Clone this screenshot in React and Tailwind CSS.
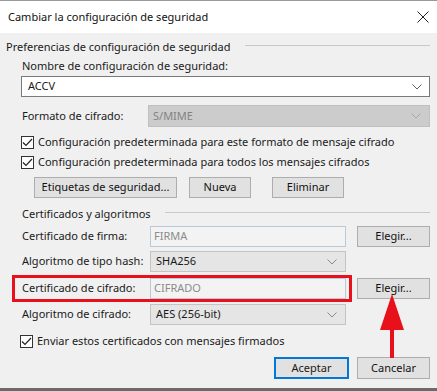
import React from "react";

const Chevron = ({ color = "#606060" }) => (
  <svg width="10" height="6" viewBox="0 0 10 6" className="shrink-0">
    <path d="M0.5 0.5 L5 5 L9.5 0.5" fill="none" stroke={color} strokeWidth="1" />
  </svg>
);

const Check = () => (
  <span className="w-[13px] h-[13px] border border-[#333] bg-white flex items-center justify-center shrink-0">
    <svg width="11" height="9" viewBox="0 0 11 9">
      <path d="M1 4.5 L4 7.5 L10 1" fill="none" stroke="#222" strokeWidth="1.2" />
    </svg>
  </span>
);

const Button = ({ children, className = "" }) => (
  <div
    className={`h-[21px] bg-[#e1e1e1] border border-[#adadad] flex items-center justify-center text-[#111] ${className}`}
  >
    {children}
  </div>
);

const Combo = ({ value, className = "" }) => (
  <div
    className={`h-[21px] bg-[#e5e5e5] border border-[#c4c4c4] flex items-center justify-between pl-[5px] pr-[8px] ${className}`}
  >
    <span>{value}</span>
    <Chevron color="#8a8a8a" />
  </div>
);

const Field = ({ value }) => (
  <div className="w-[196px] h-[21px] bg-[#f3f3f3] border border-[#b8c9dc] flex items-center pl-[3px] text-[#8c8c8c]">
    {value}
  </div>
);

export default function App() {
  return (
    <div
      className="relative w-[437px] h-[391px] bg-[#f0f0f0] text-[11px] text-[#1a1a1a] whitespace-nowrap overflow-hidden flex flex-col border-t border-[#9a9a9a]"
      style={{ fontFamily: '"Noto Sans", "Open Sans", sans-serif' }}
    >
      {/* title bar */}
      <div className="h-[32px] bg-white flex items-center justify-between pl-[8px] pr-[8px] shrink-0">
        <span className="text-[11px] text-[#111]">Cambiar la configuración de seguridad</span>
        <svg width="12" height="12" viewBox="0 0 12 12">
          <path d="M0.5 0.5 L11.5 11.5 M11.5 0.5 L0.5 11.5" stroke="#222" strokeWidth="1" />
        </svg>
      </div>

      <div className="flex items-center h-[16px] mt-[6px] pl-[6px] pr-[7px]">
        <span>Preferencias de configuración de seguridad</span>
        <div className="flex-1 h-px bg-[#c8c8c8] ml-[14px] -mt-[3px]" />
      </div>

      <div className="h-[16px] mt-[3px] pl-[22px] flex items-center">Nombre de configuración de seguridad:</div>

      <div className="h-[21px] mt-[2px] ml-[21px] mr-[7px] bg-white border border-[#7a7a7a] flex items-center justify-between pl-[6px] pr-[7px]">
        <span>ACCV</span>
        <Chevron />
      </div>

      <div className="h-[22px] mt-[8px] flex items-center pl-[22px] pr-[7px]">
        <span className="w-[126px]">Formato de cifrado:</span>
        <div className="flex-1 h-[22px] bg-[#cccccc] border border-[#bfbfbf] flex items-center justify-between pl-[4px] pr-[8px] text-[#838383]">
          <span>S/MIME</span>
          <Chevron color="#a8a8a8" />
        </div>
      </div>

      <div className="h-[16px] mt-[7px] flex items-center gap-[4px] pl-[21px]">
        <Check />
        <span>Configuración predeterminada para este formato de mensaje cifrado</span>
      </div>

      <div className="h-[16px] mt-[4px] flex items-center gap-[4px] pl-[21px]">
        <Check />
        <span>Configuración predeterminada para todos los mensajes cifrados</span>
      </div>

      <div className="h-[21px] mt-[7px] flex items-center pl-[34px]">
        <Button className="w-[143px]">Etiquetas de seguridad...</Button>
        <Button className="w-[62px] ml-[12px]">Nueva</Button>
        <Button className="w-[72px] ml-[21px]">Eliminar</Button>
      </div>

      <div className="flex items-center h-[16px] mt-[8px] pl-[22px] pr-[7px]">
        <span>Certificados y algoritmos</span>
        <div className="flex-1 h-px bg-[#c8c8c8] ml-[14px] -mt-[3px]" />
      </div>

      <div className="h-[21px] mt-[4px] flex items-center pl-[22px]">
        <span className="w-[128px]">Certificado de firma:</span>
        <Field value="FIRMA" />
        <Button className="w-[73px] ml-[11px]">Elegir...</Button>
      </div>

      <div className="h-[21px] mt-[4px] flex items-center pl-[22px]">
        <span className="w-[128px]">Algoritmo de tipo hash:</span>
        <Combo value="SHA256" className="w-[196px]" />
      </div>

      <div className="relative h-[21px] mt-[6px] flex items-center pl-[22px]">
        <span className="w-[128px]">Certificado de cifrado:</span>
        <Field value="CIFRADO" />
        <Button className="w-[73px] ml-[11px]">Elegir...</Button>
        {/* annotation box */}
        <div className="absolute left-[12px] top-[-3px] w-[340px] h-[27px] border-[3px] border-[#e8101b]" />
      </div>

      <div className="h-[21px] mt-[5px] flex items-center pl-[22px]">
        <span className="w-[128px]">Algoritmo de cifrado:</span>
        <Combo value="AES (256-bit)" className="w-[196px]" />
      </div>

      <div className="h-[16px] mt-[8px] flex items-center gap-[4px] pl-[20px]">
        <Check />
        <span>Enviar estos certificados con mensajes firmados</span>
      </div>

      <div className="h-[22px] mt-[8px] flex items-center justify-end pr-[7px] gap-[8px]">
        <div className="w-[75px] h-[22px] bg-[#e1e1e1] border-2 border-[#0078d7] flex items-center justify-center">
          Aceptar
        </div>
        <Button className="w-[73px] h-[22px]">Cancelar</Button>
      </div>

      <div className="absolute left-0 right-0 bottom-0 h-[3px] bg-[#6b6b6b]" />

      {/* red arrow annotation */}
      <svg className="absolute left-[378px] top-[293px]" width="28" height="64" viewBox="0 0 28 64">
        <polygon points="14,0 26,36 2,36" fill="#e8101b" />
        <rect x="12" y="34" width="4" height="30" fill="#e8101b" />
      </svg>
    </div>
  );
}
